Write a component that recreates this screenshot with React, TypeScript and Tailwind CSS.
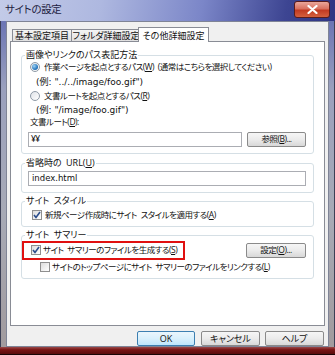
import React from "react";

const U = ({ c }: { c: string }) => <span className="underline">{c}</span>;

function Radio({ checked }: { checked?: boolean }) {
  return (
    <span className="flex h-[10px] w-[10px] shrink-0 items-center justify-center rounded-full border border-[#8e9aa6] bg-[linear-gradient(135deg,#dfe3e8,#ffffff)]">
      {checked && (
        <span className="h-[6px] w-[6px] rounded-full bg-[radial-gradient(circle_at_35%_35%,#9fd3f5,#2c7bc0_60%,#1b4f8a)]" />
      )}
    </span>
  );
}

function Check({ checked }: { checked?: boolean }) {
  return (
    <span className="flex h-[10px] w-[10px] shrink-0 items-center justify-center border border-[#8f8f8f] bg-[linear-gradient(135deg,#dcdcdc,#ffffff)]">
      {checked && (
        <svg width="8" height="8" viewBox="0 0 8 8">
          <path d="M1 4 L3 6.5 L7 1" fill="none" stroke="#2b4d8c" strokeWidth="1.6" />
        </svg>
      )}
    </span>
  );
}

function Btn({ children, w, def }: { children: React.ReactNode; w: string; def?: boolean }) {
  return (
    <div
      className={`flex h-[15px] items-center justify-center rounded-[2px] border ${w} ${
        def
          ? "border-[#3c7fb1] bg-[linear-gradient(180deg,#eaf6fd,#d9f0fc_50%,#bee6fd)]"
          : "border-[#8a8a8a] bg-[linear-gradient(180deg,#f6f6f6,#ebebeb_50%,#d8d8d8)]"
      } leading-none whitespace-nowrap`}
    >
      {children}
    </div>
  );
}

function Group({ label, children }: { label: React.ReactNode; children: React.ReactNode }) {
  return (
    <fieldset className="mx-[10px] rounded-[3px] border border-[#d5dfe5] p-0">
      <legend className="ml-[3px] px-[1px] text-[9px] leading-[12px] tracking-[0px] whitespace-nowrap">{label}</legend>
      {children}
    </fieldset>
  );
}

export default function App() {
  return (
    <div className="flex h-[355px] w-[335px] flex-col overflow-hidden bg-[linear-gradient(180deg,#5d67b2_0%,#9aa0bd_25%,#a7aab6_60%,#a19a9c_100%)] font-['Open_Sans','Noto_Sans_CJK_JP',sans-serif] text-[8.5px] tracking-[-0.5px] [word-spacing:2px] text-[#111] [font-feature-settings:'palt'_1]">
      {/* title bar */}
      <div className="flex h-[21px] shrink-0 items-start justify-between bg-[linear-gradient(100deg,#c3cbe8_0%,#aeb8e0_30%,#7b86c8_60%,#3d4592_85%,#2f3584_100%)]">
        <div className="pl-[5px] pt-[3px] text-[10.5px] leading-[13px] tracking-[-0.3px] text-[#1c2040]">サイトの設定</div>
        <div className="mr-[5px] mt-[1px] flex h-[17px] w-[36px] items-center justify-center rounded-[3px] border border-[#5a1c1c] bg-[linear-gradient(180deg,#eaa69a_0%,#d9705f_45%,#c23a22_55%,#d4603e_100%)]">
          <svg width="11" height="9" viewBox="0 0 11 9">
            <path d="M1.5 1 L9.5 8 M9.5 1 L1.5 8" stroke="#ffffff" strokeWidth="2.2" strokeLinecap="round" />
          </svg>
        </div>
      </div>

      <div className="flex shrink-0">
        <div className="w-[6px] shrink-0 border-l border-[#3b3f55]" />
        {/* client */}
        <div className="flex h-[326px] w-[323px] flex-col border border-[#7f8496] bg-[#f0f0f0] pt-[5px]">
          {/* tabs */}
          <div className="relative z-10 ml-[5px] flex h-[14px] items-end whitespace-nowrap text-[9px] tracking-[0px]">
            <div className="flex h-[12px] w-[60px] items-center justify-center border border-b-0 border-[#898c95] bg-[linear-gradient(180deg,#f4f4f4,#e0e0e0)] leading-none">
              基本設定項目
            </div>
            <div className="-ml-px flex h-[12px] w-[70px] items-center justify-center border border-b-0 border-[#898c95] bg-[linear-gradient(180deg,#f4f4f4,#e0e0e0)] leading-none">
              フォルダ詳細設定
            </div>
            <div className="-mb-px -ml-[3px] flex h-[15px] w-[71px] items-center justify-center border border-b-0 border-[#898c95] bg-white leading-none">
              その他詳細設定
            </div>
          </div>
          {/* panel */}
          <div className="ml-[3px] h-[285px] w-[315px] border border-[#898c95] bg-white pt-[7px] whitespace-nowrap">
            <Group label="画像やリンクのパス表記方法">
              <div className="flex flex-col">
                <div className="flex h-[12px] items-center pl-[8px]">
                  <Radio checked />
                  <span className="ml-[4px]">
                    作業ページを起点とするパス(<U c="W" />) (通常はこちらを選択してください)
                  </span>
                </div>
                <div className="mt-[3px] h-[12px] pl-[14px] font-['DejaVu_Sans','Noto_Sans_CJK_JP',sans-serif] text-[9px] leading-[12px] tracking-[0px] [word-spacing:0px]">(例: "../../image/foo.gif")</div>
                <div className="mt-[2px] flex h-[12px] items-center pl-[8px]">
                  <Radio />
                  <span className="ml-[4px]">
                    文書ルートを起点とするパス(<U c="R" />)
                  </span>
                </div>
                <div className="mt-[3px] h-[11px] pl-[14px] font-['DejaVu_Sans','Noto_Sans_CJK_JP',sans-serif] text-[9px] leading-[11px] tracking-[0px] [word-spacing:0px]">(例: "/image/foo.gif")</div>
                <div className="h-[11px] pl-[8px] leading-[11px]">
                  文書ルート(<U c="D" />):
                </div>
                <div className="mt-[5px] flex h-[15px] pl-[6px] pr-[7px]">
                  <div className="flex h-[15px] w-[214px] items-center border border-[#abadb3] bg-white pl-[2px] leading-none">
                    ¥¥
                  </div>
                  <div className="ml-auto">
                    <Btn w="w-[59px]">
                      参照(<U c="B" />)...
                    </Btn>
                  </div>
                </div>
                <div className="h-[6px]" />
              </div>
            </Group>

            <div className="h-[3px]" />
            <Group label={<>省略時の URL(<U c="U" />)</>}>
              <div className="mt-[2px] flex h-[15px] pl-[6px] pr-[7px]">
                <div className="flex h-[15px] w-[278px] items-center border border-[#abadb3] bg-white pl-[3px] font-['DejaVu_Sans',sans-serif] text-[8.5px] leading-none tracking-[0px]">
                  index.html
                </div>
              </div>
              <div className="h-[6px]" />
            </Group>

            <div className="h-[2px]" />
            <Group label="サイト スタイル">
              <div className="mt-[1px] flex h-[14px] items-center pl-[10px]">
                <Check checked />
                <span className="ml-[3px]">
                  新規ページ作成時にサイト スタイルを適用する(<U c="A" />)
                </span>
              </div>
              <div className="h-[4px]" />
            </Group>

            <div className="h-[2px]" />
            <Group label="サイト サマリー">
              <div className="relative">
                <div className="mt-[1px] flex h-[16px] items-center pl-[9px] pr-[7px]">
                  <Check checked />
                  <span className="ml-[2px]">
                    サイト サマリーのファイルを生成する(<U c="S" />)
                  </span>
                  <div className="ml-auto">
                    <Btn w="w-[60px]">
                      設定(<U c="O" />)...
                    </Btn>
                  </div>
                </div>
                <div className="mt-[2px] flex h-[14px] items-center pl-[18px]">
                  <Check />
                  <span className="ml-[2px]">
                    サイトのトップページにサイト サマリーのファイルをリンクする(<U c="L" />)
                  </span>
                </div>
                <div className="absolute left-0 top-[-1px] h-[19px] w-[163px] border-2 border-[#e01010]" />
              </div>
              <div className="h-[4px]" />
            </Group>
          </div>
          {/* buttons */}
          <div className="mt-[5px] flex justify-end pr-[4px] text-[9px] tracking-[0px]">
            <Btn w="w-[58px]" def>
              OK
            </Btn>
            <div className="w-[6px]" />
            <Btn w="w-[59px]">キャンセル</Btn>
            <div className="w-[5px]" />
            <Btn w="w-[59px]">ヘルプ</Btn>
          </div>
        </div>
        <div className="w-[6px] shrink-0 border-r border-[#3b3f55]" />
      </div>
      <div className="flex-1 border-b border-[#1a0505] bg-[linear-gradient(180deg,#9a4a4a,#7a1414_40%,#5a0c0c)]" />
    </div>
  );
}
